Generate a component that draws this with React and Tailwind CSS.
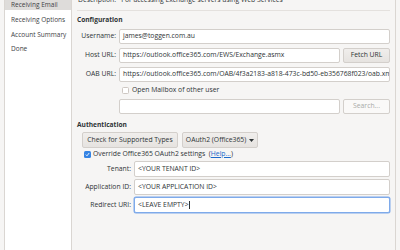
import React from 'react';

const font = { fontFamily: '"Open Sans", "Noto Sans", sans-serif' };

function Input({ value, className = '', focused = false }) {
  return (
    <div
      className={`h-[15px] bg-white rounded-[2px] border flex items-center px-[3px] text-[6.8px] text-[#2e3436] whitespace-nowrap overflow-hidden ${
        focused ? 'border-[#7eaaea] shadow-[0_0_0_0.5px_#7eaaea]' : 'border-[#d3cfcb]'
      } ${className}`}
    >
      {value}
      {focused && <span className="w-px h-[8px] bg-[#2e3436] ml-[0.5px]" />}
    </div>
  );
}

function Button({ children, disabled = false, className = '' }) {
  return (
    <div
      className={`h-[15px] rounded-[2px] border border-[#d3cfcb] flex items-center justify-center text-[6.8px] whitespace-nowrap ${
        disabled ? 'bg-[#faf9f8] text-[#a8aaa7]' : 'bg-gradient-to-b from-[#f0eeec] to-[#e6e3e0] text-[#2e3436]'
      } ${className}`}
    >
      {children}
    </div>
  );
}

function Row({ label, labelWidth, children, className = '' }) {
  return (
    <div className={`flex items-center ${className}`}>
      <div className={`${labelWidth} text-right pr-[3px] text-[6.8px] text-[#2e3436] whitespace-nowrap`}>{label}</div>
      {children}
    </div>
  );
}

export default function App() {
  const steps = ['Receiving Email', 'Receiving Options', 'Account Summary', 'Done'];
  return (
    <div className="w-[400px] h-[250px] bg-[#f6f5f4] overflow-hidden flex" style={font}>
      <div className="ml-[4px] w-[68px] h-[260px] bg-white border-x border-[#dad6d2] flex flex-col -mt-[5px]">
        {steps.map((s, i) => (
          <div
            key={s}
            className={`h-[14.6px] flex items-center pt-[6px] pl-[6px] text-[6.5px] text-[#3d4244] whitespace-nowrap ${
              i === 0 ? 'bg-[#dedcda] !h-[14.5px]' : ''
            }`}
          >
            {s}
          </div>
        ))}
      </div>

      <div className="w-[323px] h-full flex flex-col pl-[5px] pr-[5px] -mt-[5px]">
        <div className="h-[10px] flex items-center text-[6.8px] text-[#2e3436] whitespace-nowrap pl-[1px]">
          Description:&nbsp;&nbsp;&nbsp;For accessing Exchange servers using Web Services
        </div>
        <div className="h-px bg-[#e4e1de] mt-[5px]" />

        <div className="mt-[4px] text-[6.6px] font-bold text-[#2e3436] h-[10px] flex items-center">Configuration</div>

        <div className="flex flex-col gap-[4px] mt-[4px]">
          <Row label="Username:" labelWidth="w-[42px]">
            <Input value="james@toggen.com.au" className="flex-1" />
          </Row>
          <Row label="Host URL:" labelWidth="w-[42px]">
            <Input value="https://outlook.office365.com/EWS/Exchange.asmx" className="flex-1" />
            <Button className="w-[47px] ml-[3px]">Fetch URL</Button>
          </Row>
          <Row label="OAB URL:" labelWidth="w-[42px]">
            <Input value="https://outlook.office365.com/OAB/4f3a2183-a818-473c-bd50-eb356768f023/oab.xml" className="flex-1" />
          </Row>
          <div className="flex items-center pl-[45px] h-[9px]">
            <div className="w-[7px] h-[7px] border border-[#cdc7c2] bg-white rounded-[1.5px] mr-[3px]" />
            <span className="text-[6.8px] text-[#2e3436]">Open Mailbox of other user</span>
          </div>
          <div className="flex items-center pl-[42px]">
            <Input value="" className="flex-1" />
            <Button disabled className="w-[47px] ml-[3px]">Search...</Button>
          </div>
        </div>

        <div className="mt-[6px] text-[6.6px] font-bold text-[#2e3436] h-[10px] flex items-center">Authentication</div>

        <div className="pl-[5px] flex flex-col">
          <div className="flex gap-[4px] mt-[2px]">
            <Button className="w-[96px] h-[16px]">Check for Supported Types</Button>
            <Button className="w-[76px] h-[16px] gap-[3px]">
              OAuth2 (Office365)
              <svg width="5" height="3" viewBox="0 0 5 3"><path d="M0 0h5L2.5 3z" fill="#2e3436" /></svg>
            </Button>
          </div>
          <div className="flex items-center h-[10px] mt-[1px] pl-[2px]">
            <div className="w-[7px] h-[7px] bg-[#3584e4] rounded-[1.5px] mr-[2px] flex items-center justify-center">
              <svg width="5" height="5" viewBox="0 0 5 5"><path d="M0.8 2.6l1.2 1.2 2.2-2.8" stroke="white" strokeWidth="0.9" fill="none" /></svg>
            </div>
            <span className="text-[6.8px] text-[#2e3436]">
              Override Office365 OAuth2 settings&nbsp;&nbsp;(<span className="text-[#1b6acb] underline">Help...</span>)
            </span>
          </div>
          <div className="flex flex-col gap-[2px] mt-[2px]">
            <Row label="Tenant:" labelWidth="w-[52px]">
              <Input value="<YOUR TENANT ID>" className="flex-1 h-[16px]" />
            </Row>
            <Row label="Application ID:" labelWidth="w-[52px]">
              <Input value="<YOUR APPLICATION ID>" className="flex-1 h-[16px]" />
            </Row>
            <Row label="Redirect URI:" labelWidth="w-[52px]">
              <Input value="<LEAVE EMPTY>" focused className="flex-1 h-[16px]" />
            </Row>
          </div>
        </div>
      </div>
      <div className="w-px h-full bg-[#dad6d2]" />
    </div>
  );
}
